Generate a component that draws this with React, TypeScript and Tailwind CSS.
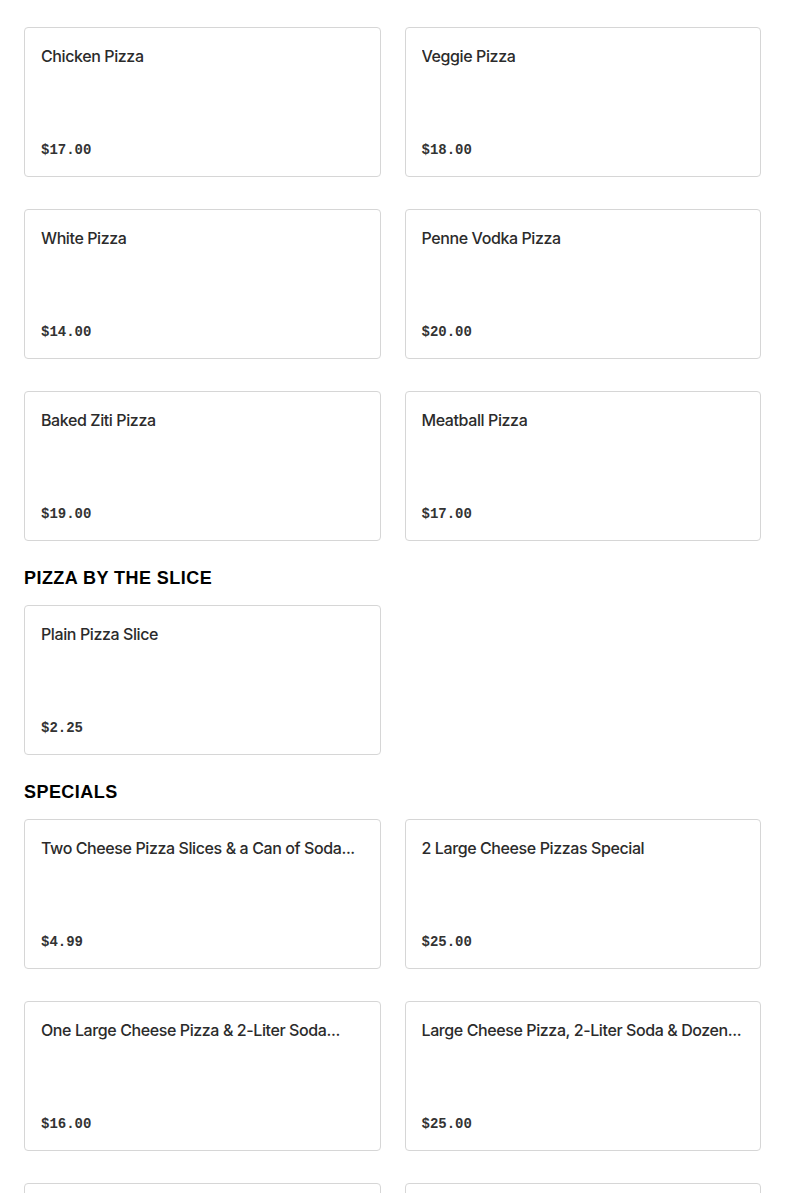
type Item = { name: string; price: string };

const sections: { title?: string; items: Item[] }[] = [
  {
    items: [
      { name: "Chicken Pizza", price: "$17.00" },
      { name: "Veggie Pizza", price: "$18.00" },
      { name: "White Pizza", price: "$14.00" },
      { name: "Penne Vodka Pizza", price: "$20.00" },
      { name: "Baked Ziti Pizza", price: "$19.00" },
      { name: "Meatball Pizza", price: "$17.00" },
    ],
  },
  {
    title: "PIZZA BY THE SLICE",
    items: [{ name: "Plain Pizza Slice", price: "$2.25" }],
  },
  {
    title: "SPECIALS",
    items: [
      { name: "Two Cheese Pizza Slices & a Can of Soda...", price: "$4.99" },
      { name: "2 Large Cheese Pizzas Special", price: "$25.00" },
      { name: "One Large Cheese Pizza & 2-Liter Soda...", price: "$16.00" },
      { name: "Large Cheese Pizza, 2-Liter Soda & Dozen...", price: "$25.00" },
      { name: "Family Special", price: "$30.00" },
      { name: "Party Special", price: "$45.00" },
    ],
  },
];

function MenuCard({ item }: { item: Item }) {
  return (
    <div className="h-[150px] border border-[#d6d6d6] rounded-[4px] bg-white p-4 flex flex-col justify-between min-w-0">
      <h3 className="text-[16px] leading-6 font-medium tracking-[-0.025em] text-[#2b2b2b] whitespace-nowrap overflow-hidden">
        {item.name}
      </h3>
      <span className="font-['Liberation_Mono',monospace] text-[14px] leading-5 font-bold text-[#333]">
        {item.price}
      </span>
    </div>
  );
}

export default function App() {
  return (
    <div className="w-full h-screen overflow-hidden bg-white font-['Inter','Liberation_Sans',sans-serif] px-6 pt-[27px] flex flex-col gap-6">
      {sections.map((section, i) => (
        <section key={i} className="flex flex-col">
          {section.title && (
            <h2 className="font-['Liberation_Sans',Arial,sans-serif] text-[18px] leading-[26px] font-black tracking-wide text-black mb-[14px]">
              {section.title}
            </h2>
          )}
          <div className="grid grid-cols-2 gap-x-6 gap-y-8">
            {section.items.map((item) => (
              <MenuCard key={item.name} item={item} />
            ))}
          </div>
        </section>
      ))}
    </div>
  );
}
